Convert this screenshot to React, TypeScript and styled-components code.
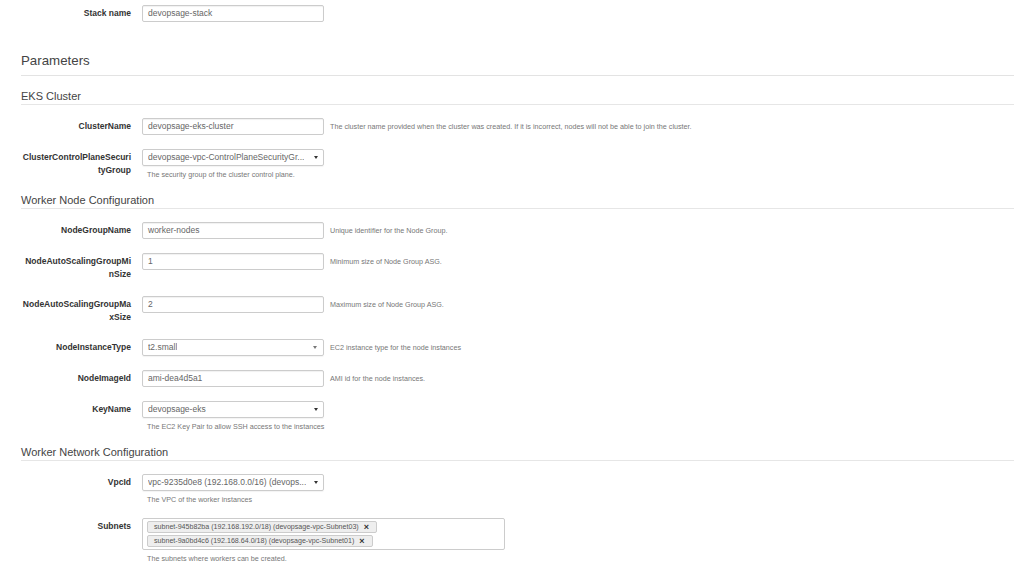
import * as React from 'react'

import styled, { createGlobalStyle } from 'styled-components'

const GlobalStyle = createGlobalStyle`
  html, body {
    margin: 0;
    padding: 0;
    background: #fff;
  }
  body {
    font-family: "Liberation Sans", Arial, Helvetica, sans-serif;
    color: #333;
  }
`

interface Field {
  label: string
  kind: 'input' | 'select' | 'native'
  value: string
  help?: string
  helpBelow?: boolean
}

interface Section {
  title: string
  fields: Field[]
}

const SECTIONS: Section[] = [
  {
    title: 'EKS Cluster',
    fields: [
      {
        label: 'ClusterName',
        kind: 'input',
        value: 'devopsage-eks-cluster',
        help: 'The cluster name provided when the cluster was created. If it is incorrect, nodes will not be able to join the cluster.',
      },
      {
        label: 'ClusterControlPlaneSecurityGroup',
        kind: 'select',
        value: 'devopsage-vpc-ControlPlaneSecurityGr...',
        help: 'The security group of the cluster control plane.',
        helpBelow: true,
      },
    ],
  },
  {
    title: 'Worker Node Configuration',
    fields: [
      { label: 'NodeGroupName', kind: 'input', value: 'worker-nodes', help: 'Unique identifier for the Node Group.' },
      { label: 'NodeAutoScalingGroupMinSize', kind: 'input', value: '1', help: 'Minimum size of Node Group ASG.' },
      { label: 'NodeAutoScalingGroupMaxSize', kind: 'input', value: '2', help: 'Maximum size of Node Group ASG.' },
      { label: 'NodeInstanceType', kind: 'native', value: 't2.small', help: 'EC2 instance type for the node instances' },
      { label: 'NodeImageId', kind: 'input', value: 'ami-dea4d5a1', help: 'AMI id for the node instances.' },
      {
        label: 'KeyName',
        kind: 'select',
        value: 'devopsage-eks',
        help: 'The EC2 Key Pair to allow SSH access to the instances',
        helpBelow: true,
      },
    ],
  },
]

const SUBNETS = [
  'subnet-945b82ba (192.168.192.0/18) (devopsage-vpc-Subnet03)',
  'subnet-9a0bd4c6 (192.168.64.0/18) (devopsage-vpc-Subnet01)',
]

const FieldControl: React.FC<{ field: Field }> = ({ field }) => {
  if (field.kind === 'input') return <TextBox>{field.value}</TextBox>
  return (
    <SelectBox>
      <SelectText>{field.value}</SelectText>
      <Caret $native={field.kind === 'native'} />
    </SelectBox>
  )
}

const FieldRow: React.FC<{ field: Field }> = ({ field }) => (
  <Row>
    <Label>{field.label}</Label>
    <Control>
      <ControlLine>
        <FieldControl field={field} />
        {field.help && !field.helpBelow && <InlineHelp>{field.help}</InlineHelp>}
      </ControlLine>
      {field.help && field.helpBelow && <BelowHelp>{field.help}</BelowHelp>}
    </Control>
  </Row>
)

const App: React.FC = () => (
  <Page>
    <GlobalStyle />
    <Row>
      <Label>Stack name</Label>
      <Control>
        <TextBox>devopsage-stack</TextBox>
      </Control>
    </Row>

    <PageHeading>Parameters</PageHeading>

    {SECTIONS.map(section => (
      <React.Fragment key={section.title}>
        <SectionHeading>{section.title}</SectionHeading>
        {section.fields.map(field => (
          <FieldRow key={field.label} field={field} />
        ))}
      </React.Fragment>
    ))}

    <SectionHeading>Worker Network Configuration</SectionHeading>
    <FieldRow
      field={{
        label: 'VpcId',
        kind: 'select',
        value: 'vpc-9235d0e8 (192.168.0.0/16) (devops...',
        help: 'The VPC of the worker instances',
        helpBelow: true,
      }}
    />
    <Row>
      <Label>Subnets</Label>
      <Control>
        <MultiBox>
          {SUBNETS.map(subnet => (
            <Tag key={subnet}>
              {subnet}
              <TagRemove>×</TagRemove>
            </Tag>
          ))}
        </MultiBox>
        <BelowHelp>The subnets where workers can be created.</BelowHelp>
      </Control>
    </Row>
  </Page>
)

export default App

const Page = styled.div`
  padding: 5px 10px 0 21px;
  width: 1024px;
  box-sizing: border-box;
`

const Row = styled.div`
  display: flex;
  align-items: flex-start;
  margin-bottom: 14px;
`

const Label = styled.div`
  width: 110px;
  flex-shrink: 0;
  margin-right: 11px;
  padding: 2px 0 1px;
  text-align: right;
  font-size: 8.5px;
  line-height: 13px;
  font-weight: bold;
  color: #333;
  word-break: break-all;
`

const Control = styled.div`
  display: flex;
  flex-direction: column;
`

const ControlLine = styled.div`
  display: flex;
  align-items: flex-start;
`

const TextBox = styled.div`
  width: 182px;
  height: 17px;
  box-sizing: border-box;
  border: 1px solid #ccc;
  border-radius: 2px;
  box-shadow: inset 0 1px 1px rgba(0, 0, 0, 0.06);
  padding: 0 5px;
  font-size: 8.5px;
  line-height: 15px;
  color: #666;
  white-space: nowrap;
  overflow: hidden;
`

const SelectBox = styled(TextBox)`
  display: flex;
  align-items: center;
  justify-content: space-between;
  box-shadow: 0 1px 1px rgba(0, 0, 0, 0.05);
`

const SelectText = styled.span`
  overflow: hidden;
  white-space: nowrap;
`

const Caret = styled.span<{ $native: boolean }>`
  flex-shrink: 0;
  margin-left: 6px;
  margin-right: ${p => (p.$native ? '1px' : '0')};
  width: 0;
  height: 0;
  border-top: ${p => (p.$native ? '3px solid #777' : '3px solid #333')};
  border-left: 2.5px solid transparent;
  border-right: 2.5px solid transparent;
`

const InlineHelp = styled.span`
  margin-left: 6px;
  font-size: 7.2px;
  line-height: 17px;
  color: #777;
  white-space: nowrap;
`

const BelowHelp = styled.div`
  margin-top: 4px;
  padding-left: 5px;
  font-size: 7.2px;
  line-height: 9px;
  color: #777;
  white-space: nowrap;
`

const PageHeading = styled.h2`
  margin: 31px 0 13px;
  padding-bottom: 7px;
  border-bottom: 1px solid #e3e3e3;
  font-size: 13.3px;
  line-height: 15px;
  font-weight: normal;
  color: #444;
`

const SectionHeading = styled.h3`
  margin: 0 0 13px;
  padding: 1px 0 1px;
  border-bottom: 1px solid #e6e6e6;
  font-size: 11px;
  line-height: 13px;
  font-weight: normal;
  color: #444;
`

const MultiBox = styled.div`
  width: 363px;
  height: 32px;
  box-sizing: border-box;
  border: 1px solid #ccc;
  border-radius: 2px;
  padding: 2px 4px;
  display: flex;
  flex-direction: column;
  align-items: flex-start;
  gap: 2px;
`

const Tag = styled.span`
  display: inline-flex;
  align-items: center;
  height: 14px;
  box-sizing: border-box;
  border: 1px solid #ccc;
  border-radius: 2px;
  background: #eee;
  padding: 0 7px 0 6px;
  font-size: 7.1px;
  color: #555;
  white-space: nowrap;
`

const TagRemove = styled.span`
  margin-left: 5px;
  font-size: 9px;
  font-weight: bold;
  color: #333;
  line-height: 1;
`
